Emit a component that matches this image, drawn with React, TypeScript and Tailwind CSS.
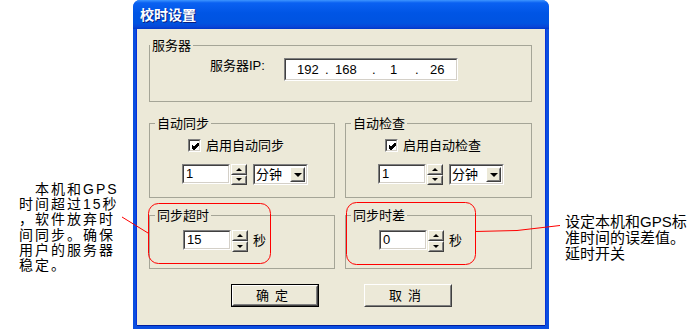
import React from 'react';

const cjk = '"Liberation Sans", "Noto Sans CJK SC", sans-serif';

// classic 3D sunken edit box
function Sunken({ className = '', children }: { className?: string; children?: React.ReactNode }) {
  return (
    <div className={`border border-t-[#808080] border-l-[#808080] border-b-white border-r-white ${className}`}>
      <div className="h-full w-full border border-t-[#404040] border-l-[#404040] border-b-[#d4d0c8] border-r-[#d4d0c8] bg-white">
        {children}
      </div>
    </div>
  );
}

function Raised({ className = '', children }: { className?: string; children?: React.ReactNode }) {
  return (
    <div className={`border border-t-white border-l-white border-b-[#404040] border-r-[#404040] bg-[#ece9d8] ${className}`}>
      <div className="flex h-full w-full items-center justify-center border border-t-[#ece9d8] border-l-[#ece9d8] border-b-[#808080] border-r-[#808080]">
        {children}
      </div>
    </div>
  );
}

const Up = () => <div className="h-0 w-0 border-x-[3px] border-b-[3px] border-x-transparent border-b-black" />;
const Down = () => <div className="h-0 w-0 border-x-[3px] border-t-[3px] border-x-transparent border-t-black" />;

function Spin({ h = 21 }: { h?: number }) {
  return (
    <div className="flex w-[16px] flex-col" style={{ height: h }}>
      <Raised className="flex-1"><Up /></Raised>
      <Raised className="flex-1"><Down /></Raised>
    </div>
  );
}

function NumBox({ value, h = 20 }: { value: string; h?: number }) {
  return (
    <Sunken className="w-[48px]">
      <div className="pl-[2px] text-[13px] text-black" style={{ lineHeight: `${h - 4}px`, height: h - 4 }}>{value}</div>
    </Sunken>
  );
}

function Combo() {
  return (
    <Sunken className="h-[21px] w-[55px]">
      <div className="flex h-full items-center justify-between pl-[1px] pr-[1px]">
        <span className="text-[13px] leading-[15px]">分钟</span>
        <Raised className="h-[15px] w-[15px]">
          <div className="h-0 w-0 border-x-[4px] border-t-[4px] border-x-transparent border-t-black" />
        </Raised>
      </div>
    </Sunken>
  );
}

function Check() {
  return (
    <Sunken className="h-[13px] w-[13px]">
      <svg width="11" height="11" viewBox="0 0 11 11">
        <path d="M2 4.5 L4 6.5 L8.5 2 M2 5.5 L4 7.5 L8.5 3 M2 6.5 L4 8.5 L8.5 4" stroke="#000" strokeWidth="1" fill="none" shapeRendering="crispEdges" />
      </svg>
    </Sunken>
  );
}

function Group({ title, className = '', legend = 'ml-[5px]', children }: { title: string; className?: string; legend?: string; children?: React.ReactNode }) {
  return (
    <fieldset className={`border border-[#a5a597] ${className}`}>
      <legend className={`${legend} px-[2px] text-[13px] leading-[15px] text-black`}>{title}</legend>
      {children}
    </fieldset>
  );
}

function SyncBox({ label, cbx, inx }: { label: string; cbx: number; inx: number }) {
  return (
    <>
      <div className="mt-[7px] flex items-center gap-[5px]" style={{ paddingLeft: cbx }}>
        <Check />
        <span className="text-[13px] leading-[15px]">{label}</span>
      </div>
      <div className="mt-[11px] flex items-start gap-[1px]" style={{ paddingLeft: inx }}>
        <NumBox value="1" />
        <Spin h={21} />
        <div className="ml-[5px]"><Combo /></div>
      </div>
    </>
  );
}

function Timeout({ value, inx }: { value: string; inx: number }) {
  return (
    <div className="mt-[7px] flex items-start" style={{ paddingLeft: inx }}>
      <NumBox value={value} h={20} />
      <div className="ml-[1px]"><Spin h={22} /></div>
      <span className="ml-[5px] mt-[3px] text-[13px] leading-[15px]">秒</span>
    </div>
  );
}

export default function App() {
  return (
    <div className="relative flex h-[331px] w-[693px] overflow-hidden bg-white text-black" style={{ fontFamily: cjk }}>
      {/* left note */}
      <div className="w-[133px] shrink-0 pl-[19px] pt-[182px] text-[14px] leading-[15.2px] tracking-[2px] whitespace-nowrap">
        <div className="pl-[16px]">本机和GPS</div>
        <div>时间超过15秒</div>
        <div>，软件放弃时</div>
        <div>间同步。确保</div>
        <div>用户的服务器</div>
        <div>稳定。</div>
      </div>

      {/* dialog */}
      <div className="flex h-[329px] w-[416px] shrink-0 flex-col rounded-t-[7px] bg-[#0a4ee0]">
        <div className="flex h-[29px] shrink-0 items-center rounded-t-[7px] bg-[linear-gradient(to_bottom,#3d95ff_0%,#0a61f2_10%,#0055e5_45%,#0053e0_80%,#0846d8_92%,#0037c8_100%)] pl-[7px]">
          <span className="text-[14px] font-bold leading-[16px] text-white [text-shadow:1px_1px_0_#0a1e80]">校时设置</span>
        </div>
        <div className="mx-[4px] mb-[4px] flex flex-1 flex-col bg-[#ece9d8] pl-[12px] pr-[13px] pt-[9px] shadow-[-1px_0_0_#0831d9,1px_0_0_#0831d9,0_1px_0_#001ea0]">
          <Group title="服务器" className="h-[64px]" legend="ml-0">
            <div className="mt-[5px] flex items-start pl-[60px]">
              <span className="w-[74px] text-[13px] leading-[15px]">服务器IP:</span>
              <Sunken className="h-[23px] w-[174px]">
                <div className="flex h-full items-center pl-[11px] text-[13px] leading-[15px]">
                  <span className="w-[28px]">192</span>
                  <span className="w-[10px]">.</span>
                  <span className="w-[37px]">168</span>
                  <span className="w-[18px]">.</span>
                  <span className="w-[25px]">1</span>
                  <span className="w-[15px]">.</span>
                  <span>26</span>
                </div>
              </Sunken>
            </div>
          </Group>

          <div className="mt-[14px] flex gap-[10px]">
            <Group title="自动同步" className="h-[82px] w-[186px]">
              <SyncBox label="启用自动同步" cbx={38} inx={32} />
            </Group>
            <Group title="自动检查" className="h-[82px] w-[187px]">
              <SyncBox label="启用自动检查" cbx={39} inx={32} />
            </Group>
          </div>

          <div className="mt-[10px] flex gap-[10px]">
            <Group title="同步超时" className="h-[61px] w-[186px]">
              <Timeout value="15" inx={33} />
            </Group>
            <Group title="同步时差" className="h-[61px] w-[187px]">
              <Timeout value="0" inx={33} />
            </Group>
          </div>

          <div className="mt-[15px] flex pl-[82px]">
            <div className="h-[23px] w-[88px] border border-black">
              <Raised className="h-full w-full">
                <span className="text-[13px] leading-[15px] tracking-[6px]">确定</span>
              </Raised>
            </div>
            <Raised className="ml-[45px] h-[23px] w-[88px]">
              <span className="text-[13px] leading-[15px] tracking-[6px]">取消</span>
            </Raised>
          </div>
        </div>
      </div>

      {/* right note */}
      <div className="pl-[16px] pt-[214px] text-[15px] leading-[16px] whitespace-nowrap">
        <div>设定本机和GPS标</div>
        <div>准时间的误差值。</div>
        <div>延时开关</div>
      </div>

      {/* red annotation marks */}
      <svg className="pointer-events-none absolute left-0 top-0" width="693" height="331">
        <rect x="148.5" y="203.5" width="122" height="60" rx="10" fill="none" stroke="#ff0000" />
        <rect x="346.5" y="202.5" width="129" height="62" rx="10" fill="none" stroke="#ff0000" />
        <line x1="122" y1="217" x2="148" y2="233" stroke="#ff0000" />
        <polyline points="475,231.5 517,230.5 560,225.5" fill="none" stroke="#ff0000" />
      </svg>
    </div>
  );
}
